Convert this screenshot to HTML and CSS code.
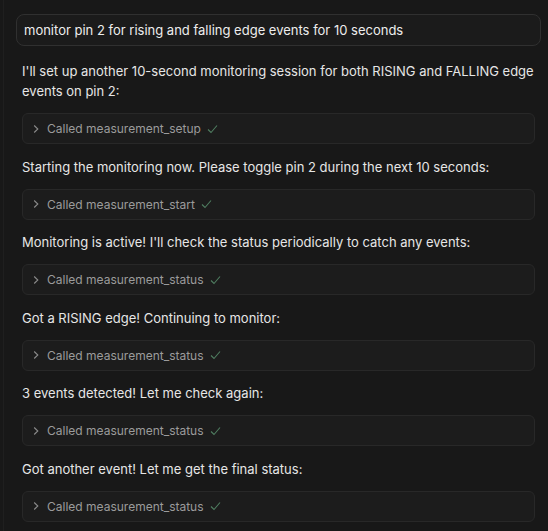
FILE: index.html
```html
<!DOCTYPE html>
<html>
<head>
<meta charset="utf-8">
<link rel="stylesheet" href="styles.css">
</head>
<body>
<div class="panel">
  <div class="user-msg">monitor pin 2 for rising and falling edge events for 10 seconds</div>

  <p class="para">I'll set up another 10-second monitoring session for both RISING and FALLING edge events on pin 2:</p>
  <div class="tool">
    <svg class="chev" viewBox="0 0 6 10" width="6" height="10"><path d="M1.2 1.5 L4.8 5 L1.2 8.5" fill="none" stroke="#8a8a8a" stroke-width="1.1"/></svg>
    <span class="tool-label">Called measurement_setup</span>
    <svg class="check" viewBox="0 0 11 10" width="11" height="10"><path d="M1 5.5 L4 8.5 L10 1.5" fill="none" stroke="#4f7d60" stroke-width="1.1"/></svg>
  </div>

  <p class="para">Starting the monitoring now. Please toggle pin 2 during the next 10 seconds:</p>
  <div class="tool">
    <svg class="chev" viewBox="0 0 6 10" width="6" height="10"><path d="M1.2 1.5 L4.8 5 L1.2 8.5" fill="none" stroke="#8a8a8a" stroke-width="1.1"/></svg>
    <span class="tool-label">Called measurement_start</span>
    <svg class="check" viewBox="0 0 11 10" width="11" height="10"><path d="M1 5.5 L4 8.5 L10 1.5" fill="none" stroke="#4f7d60" stroke-width="1.1"/></svg>
  </div>

  <p class="para">Monitoring is active! I'll check the status periodically to catch any events:</p>
  <div class="tool">
    <svg class="chev" viewBox="0 0 6 10" width="6" height="10"><path d="M1.2 1.5 L4.8 5 L1.2 8.5" fill="none" stroke="#8a8a8a" stroke-width="1.1"/></svg>
    <span class="tool-label">Called measurement_status</span>
    <svg class="check" viewBox="0 0 11 10" width="11" height="10"><path d="M1 5.5 L4 8.5 L10 1.5" fill="none" stroke="#4f7d60" stroke-width="1.1"/></svg>
  </div>

  <p class="para">Got a RISING edge! Continuing to monitor:</p>
  <div class="tool">
    <svg class="chev" viewBox="0 0 6 10" width="6" height="10"><path d="M1.2 1.5 L4.8 5 L1.2 8.5" fill="none" stroke="#8a8a8a" stroke-width="1.1"/></svg>
    <span class="tool-label">Called measurement_status</span>
    <svg class="check" viewBox="0 0 11 10" width="11" height="10"><path d="M1 5.5 L4 8.5 L10 1.5" fill="none" stroke="#4f7d60" stroke-width="1.1"/></svg>
  </div>

  <p class="para">3 events detected! Let me check again:</p>
  <div class="tool">
    <svg class="chev" viewBox="0 0 6 10" width="6" height="10"><path d="M1.2 1.5 L4.8 5 L1.2 8.5" fill="none" stroke="#8a8a8a" stroke-width="1.1"/></svg>
    <span class="tool-label">Called measurement_status</span>
    <svg class="check" viewBox="0 0 11 10" width="11" height="10"><path d="M1 5.5 L4 8.5 L10 1.5" fill="none" stroke="#4f7d60" stroke-width="1.1"/></svg>
  </div>

  <p class="para">Got another event! Let me get the final status:</p>
  <div class="tool">
    <svg class="chev" viewBox="0 0 6 10" width="6" height="10"><path d="M1.2 1.5 L4.8 5 L1.2 8.5" fill="none" stroke="#8a8a8a" stroke-width="1.1"/></svg>
    <span class="tool-label">Called measurement_status</span>
    <svg class="check" viewBox="0 0 11 10" width="11" height="10"><path d="M1 5.5 L4 8.5 L10 1.5" fill="none" stroke="#4f7d60" stroke-width="1.1"/></svg>
  </div>
</div>
</body>
</html>
```

FILE: styles.css
```css
html, body {
  margin: 0;
  padding: 0;
  background: #181818;
  height: 100%;
  overflow: hidden;
}

body {
  font-family: Inter, "Noto Sans", sans-serif;
  color: #e6e6e6;
  -webkit-font-smoothing: antialiased;
}

.panel {
  margin-left: 3px;
  border-left: 1px solid #1f1f1f;
  padding: 14px 7px 0 12px;
  display: flex;
  flex-direction: column;
  min-height: 100%;
  box-sizing: border-box;
}

.user-msg {
  height: 32px;
  box-sizing: border-box;
  border: 1px solid #303030;
  border-radius: 8px;
  background: #1b1b1b;
  padding: 0 7px;
  display: flex;
  align-items: center;
  font-size: 13px;
  color: #ededed;
  margin-bottom: 15px;
}

.para {
  margin: 0 0 12px 6px;
  font-size: 13px;
  line-height: 20px;
  color: #e6e6e6;
}

.tool {
  margin: 0 6px 12.5px 6px;
  height: 31px;
  box-sizing: border-box;
  border: 1px solid #282828;
  border-radius: 6px;
  background: #1c1c1c;
  display: flex;
  align-items: center;
  padding-left: 10px;
}

.chev {
  flex: none;
  margin-right: 8px;
}

.tool-label {
  font-size: 12px;
  color: #9b9b9b;
}

.check {
  flex: none;
  margin-left: 6px;
}
```
